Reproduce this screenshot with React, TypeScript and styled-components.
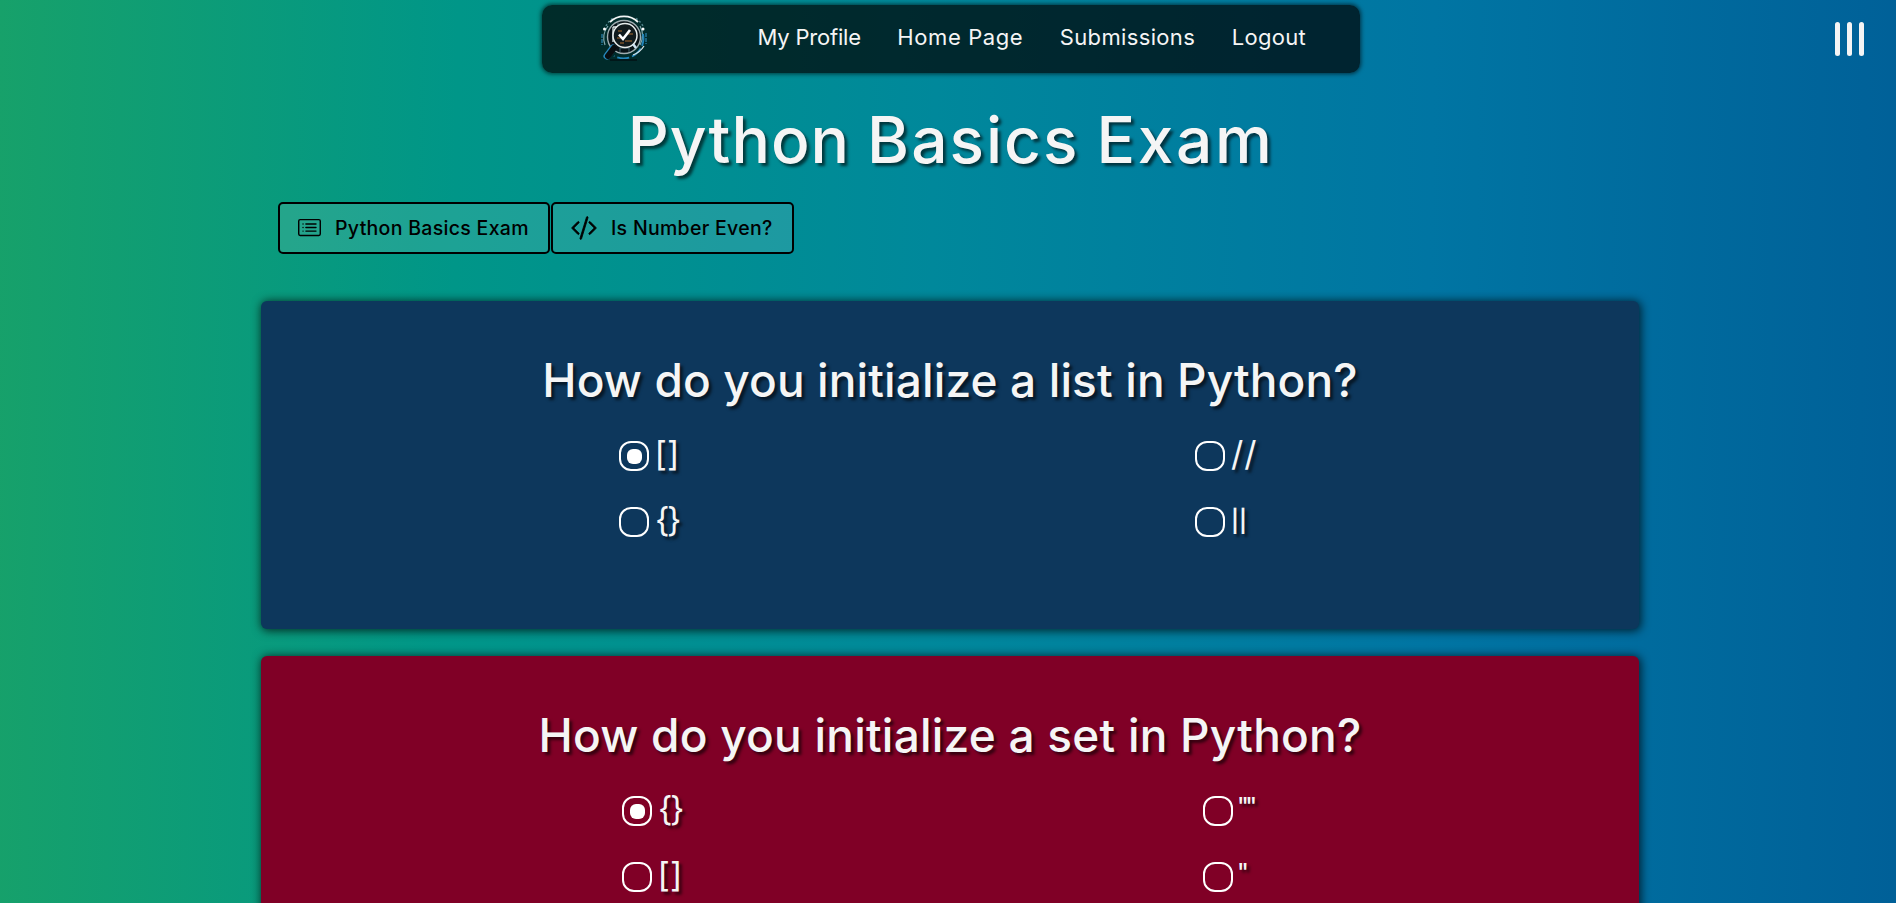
import React from 'react';
import styled, { createGlobalStyle } from 'styled-components';
import { BsCardList, BsCodeSlash } from 'react-icons/bs';

const GlobalStyle = createGlobalStyle`
  * { box-sizing: border-box; }
  body {
    margin: 0;
    overflow: hidden;
    font-family: Inter, sans-serif;
    color: #f5f5f5;
  }
`;

const Page = styled.div`
  height: 100vh;
  overflow: hidden;
  padding: 5px 0 0 4px;
  display: flex;
  flex-direction: column;
  align-items: center;
  background: linear-gradient(91deg, #17a16a 0%, #009688 24%, #00889b 49%, #0075a3 75%, #006098 100%);
`;

const NavBar = styled.nav`
  flex: none;
  width: 818px;
  height: 68px;
  margin-left: 2px;
  padding: 0 54px 2px 58px;
  display: flex;
  align-items: center;
  justify-content: space-between;
  border-radius: 10px;
  background: rgba(0, 0, 0, 0.7);
  box-shadow: 0 0 4px 1px rgba(0, 0, 0, 0.6);
`;

const NavLinks = styled.div`
  display: flex;
  gap: 36.5px;
  padding-bottom: 2px;
`;

const NavLink = styled.a<{ $track: number }>`
  font-size: 22px;
  line-height: 30px;
  letter-spacing: ${(p) => p.$track}px;
  white-space: nowrap;
`;

const MenuButton = styled.button`
  position: absolute;
  top: 22px;
  right: 32px;
  width: 29.5px;
  height: 34px;
  padding: 0;
  border: 0;
  background: none;
  display: flex;
  justify-content: space-between;
`;

const MenuBar = styled.span`
  width: 5.5px;
  height: 34px;
  border-radius: 2.5px;
  background: #f5f5f5;
`;

const Title = styled.h1`
  flex: none;
  margin: 27px 0 0 2px;
  height: 80px;
  font-size: 64px;
  line-height: 80px;
  font-weight: 500;
  white-space: nowrap;
  text-shadow: 3px 3px 3px rgba(0, 0, 0, 0.6);
`;

const Word = styled.span<{ $track: number }>`
  letter-spacing: ${(p) => p.$track}px;
`;

const Content = styled.main`
  flex: none;
  width: 1378px;
  display: flex;
  flex-direction: column;
`;

const Tabs = styled.div`
  display: flex;
  gap: 1px;
  margin: 22px 0 47px 17px;
`;

const Tab = styled.button<{ $width: number; $track: number; $gap: number; $stroke: number }>`
  width: ${(p) => p.$width}px;
  height: 52px;
  padding: 0 0 1px 18px;
  display: flex;
  align-items: center;
  gap: ${(p) => p.$gap}px;
  border: 2px solid #000;
  border-radius: 5px;
  background: rgba(255, 255, 255, 0.115);
  color: #000;
  font: 500 19.5px Inter, sans-serif;
  letter-spacing: ${(p) => p.$track}px;
  white-space: nowrap;

  svg {
    stroke: currentColor;
    stroke-width: ${(p) => p.$stroke}px;
  }
`;

const Card = styled.section<{ $color: string }>`
  height: 328px;
  margin-bottom: 27px;
  padding-top: 51px;
  border-radius: 6px;
  background: ${(p) => p.$color};
  box-shadow: 1px 1px 10px 1px rgba(0, 0, 0, 0.7);
`;

const Question = styled.h2<{ $track: number }>`
  margin: 0 0 33px;
  font-size: 46px;
  line-height: 56px;
  font-weight: 500;
  text-align: center;
  letter-spacing: ${(p) => p.$track}px;
  text-shadow: 3px 3px 3px rgba(0, 0, 0, 0.6);
`;

const Options = styled.div<{ $inset: number; $column: number }>`
  display: grid;
  grid-template-columns: ${(p) => p.$column}px 300px;
  grid-auto-rows: 30px;
  row-gap: 36px;
  padding-left: ${(p) => p.$inset}px;
`;

const Option = styled.label`
  display: flex;
  align-items: center;
  height: 30px;
`;

const Radio = styled.span`
  width: 30px;
  height: 30px;
  flex: none;
  display: grid;
  place-items: center;
  border: 2px solid #fff;
  border-radius: 12px;
`;

const Dot = styled.span`
  width: 15px;
  height: 15px;
  border-radius: 6px;
  background: #fff;
`;

type Glyph = { text: string; size: number; weight: number; left: number; lift: number; track: number };

const OptionText = styled.span<{ $g: Glyph }>`
  font-size: ${(p) => p.$g.size}px;
  font-weight: ${(p) => p.$g.weight};
  line-height: 30px;
  letter-spacing: ${(p) => p.$g.track}px;
  margin-left: ${(p) => p.$g.left}px;
  padding-bottom: ${(p) => p.$g.lift}px;
  text-shadow: 3px 3px 3px rgba(0, 0, 0, 0.6);
`;

const brackets: Glyph = { text: '[]', size: 34, weight: 400, left: 5.5, lift: 5, track: 0 };
const braces: Glyph = { text: '{}', size: 34, weight: 400, left: 6, lift: 5, track: -2.5 };
const slashes: Glyph = { text: '//', size: 34, weight: 400, left: 6, lift: 4, track: 1 };
const bars: Glyph = { text: '||', size: 22, weight: 600, left: 6, lift: 2, track: 0 };
const pair: Glyph = { text: '""', size: 24, weight: 500, left: 4, lift: 8, track: -3.5 };
const single: Glyph = { text: '"', size: 24, weight: 500, left: 4, lift: 8, track: 0 };

const questions = [
  {
    text: 'How do you initialize a list in Python?',
    color: '#0d375c',
    track: 0.12,
    inset: 358,
    column: 576,
    options: [brackets, slashes, braces, bars],
  },
  {
    text: 'How do you initialize a set in Python?',
    color: '#800026',
    track: 0.22,
    inset: 361,
    column: 581,
    options: [braces, pair, brackets, single],
  },
];

const Logo = () => (
  <svg width="48" height="48" viewBox="0 0 48 48" fill="none">
    <path d="M6 12A22 22 0 0 1 13 4M36 4.500A22 22 0 0 1 43 12" stroke="#4d8188" strokeWidth="1.500" strokeDasharray="2 2" />
    <path d="M10 8A20 20 0 0 1 38 8" stroke="#f1f5f5" strokeWidth="1.800" />
    <path d="M8 12A20 20 0 0 0 5 31M40 12A20 20 0 0 1 40 31" stroke="#7fa7ac" strokeWidth="1.200" />
    <path d="M2 20V31M46 19V30" stroke="#297fa8" strokeWidth="1.300" strokeDasharray="4 1" />
    <path d="M43 20A20 20 0 0 1 14 42" stroke="#2185bb" strokeWidth="1.800" strokeDasharray="12 3" />
    <path d="M44 32A22 22 0 0 1 33 41" stroke="#d7e2e4" strokeWidth="1.300" />
    <circle cx="24" cy="23" r="16.500" fill="#081217" stroke="#9fadb1" strokeWidth="1.400" />
    <path d="M17 10H31M20 38V34H29V38" stroke="#35515a" strokeWidth="1.300" />
    <path d="M13 13H33M13 13V28" stroke="#dfe6e7" strokeWidth="1.300" />
    <circle cx="25" cy="21.500" r="12" fill="#101a1d" stroke="#e6ecec" strokeWidth="1.500" />
    <path d="M18 17H22M28 20H33M17 24H21M25 27H32M20 29H24" stroke="#76502b" strokeWidth="1.300" />
    <path d="M19 20.500L23 25L30 16" stroke="#fff" strokeWidth="2.600" />
    <path d="M33 30L36 34" stroke="#cfe4f2" strokeWidth="2.500" />
    <path d="M13 34L7 42" stroke="#2688bd" strokeWidth="7" strokeLinecap="round" />
    <path d="M14 34L8 42" stroke="#080d10" strokeWidth="6" strokeLinecap="round" />
    <path d="M10 46H37" stroke="#011719" strokeWidth="2" />
    <circle cx="4.500" cy="15" r="1.500" fill="#fff" />
    <circle cx="43" cy="15" r="1.500" fill="#fff" />
  </svg>
);

export default function App() {
  return (
    <>
      <GlobalStyle />
      <Page>
        <NavBar>
          <Logo />
          <NavLinks>
            <NavLink $track={-0.2}>My Profile</NavLink>
            <NavLink $track={0.6}>Home Page</NavLink>
            <NavLink $track={0.35}>Submissions</NavLink>
            <NavLink $track={0.3}>Logout</NavLink>
          </NavLinks>
        </NavBar>
        <MenuButton aria-label="Menu">
          <MenuBar />
          <MenuBar />
          <MenuBar />
        </MenuButton>
        <Title>
          <Word $track={1}>Python</Word> <Word $track={2}>Basics</Word> <Word $track={2.6}>Exam</Word>
        </Title>
        <Content>
          <Tabs>
            <Tab $width={272} $track={0.3} $gap={14} $stroke={0}>
              <BsCardList size={23} />
              Python Basics Exam
            </Tab>
            <Tab $width={243} $track={0.3} $gap={14} $stroke={0.5}>
              <BsCodeSlash size={26} />
              Is Number Even?
            </Tab>
          </Tabs>
          {questions.map((q) => (
            <Card key={q.text} $color={q.color}>
              <Question $track={q.track}>{q.text}</Question>
              <Options $inset={q.inset} $column={q.column}>
                {q.options.map((g, i) => (
                  <Option key={g.text}>
                    <Radio>{i === 0 && <Dot />}</Radio>
                    <OptionText $g={g}>{g.text}</OptionText>
                  </Option>
                ))}
              </Options>
            </Card>
          ))}
        </Content>
      </Page>
    </>
  );
}
